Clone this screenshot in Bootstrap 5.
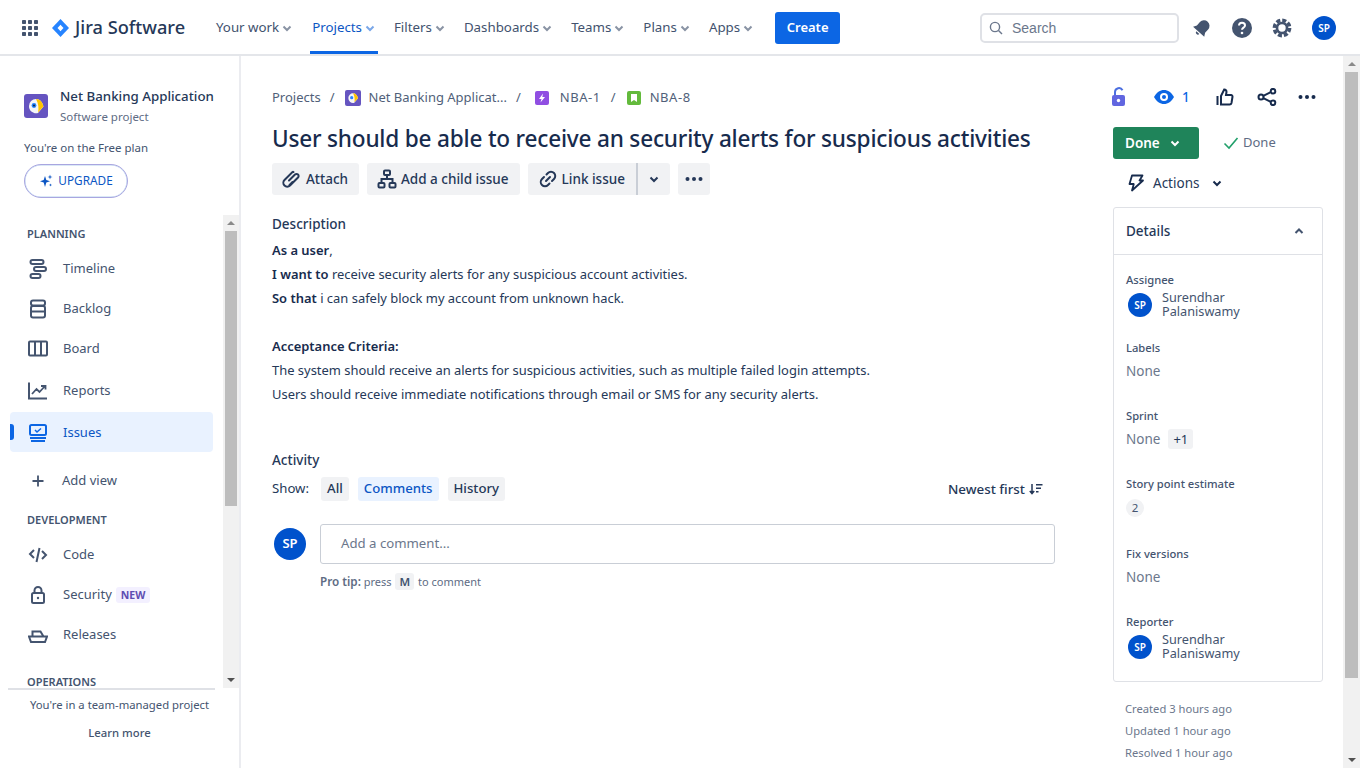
<!doctype html>
<html lang="en"><head><meta charset="utf-8"><title>NBA-8</title>
<link href="https://cdn.jsdelivr.net/npm/bootstrap@5.3.0/dist/css/bootstrap.min.css" rel="stylesheet">
<style>
html,body{height:768px;overflow:hidden}
body{font-family:"Noto Sans","Open Sans","Liberation Sans",sans-serif;font-size:13px;color:#253858;background:#fff}
svg{display:block;flex:none}
.topbar{height:56px;border-bottom:2px solid #e4e6ea;padding-left:22px}
.dn1{margin-top:2px}
.logo-mark{margin-left:14px}
.logo-text{font-size:18.2px;font-weight:500;color:#253858;margin-left:6px;width:141px;margin-top:1px}
.top-item{height:54px;padding:2px 6px 0 0;margin-right:12px;color:#42526e;font-size:13.3px;gap:2px;white-space:nowrap}
.top-item.on{color:#0c56c4;border-bottom:3px solid #0c66e4;margin:0 16px 0 -1px;padding:5px 2px 0 2px}
.create-btn{background:#0c66e4;color:#fff;font-weight:600;font-size:13px;width:65px;height:32px;border-radius:3px;margin-left:3px}
.search-box{width:199px;height:30px;border:2px solid #dfe1e6;border-radius:5px;padding-left:7px;gap:9px;color:#6b778c;font-family:"Liberation Sans",sans-serif;font-size:14px}
.top-icons{gap:20px;margin-left:13px;margin-right:24px}
.av{border-radius:50%;background:#0052cc;color:#fff;font-weight:600;flex:none}
.av-24{width:24px;height:24px;font-size:10px}
.av-32{width:32px;height:32px;font-size:13px}
.shell{height:712px}
.sidebar{width:241px;border-right:2px solid #ebecf0;flex:none}
.side-head{height:159px;padding:30px 0 0 24px}
.head-row{gap:12px}
.proj-name{font-size:13.3px;font-weight:500;color:#253858;line-height:20px}
.proj-sub{font-size:11.5px;color:#5e6c84;line-height:16px;margin-top:3px}
.free{font-size:11.5px;color:#44546f;line-height:16px;margin-top:15px}
.upgrade{width:104px;height:34px;margin-top:8px;border-radius:17px;border:1px solid #a9a6e0;color:#0c56c4;font-size:11.8px;gap:5px;box-shadow:inset 0 0 0 .5px #b8d4f0}
.side-scroll{height:473px;overflow:hidden}
.side-list{width:223px;flex:none;overflow:hidden}
.side-title{font-size:11px;font-weight:600;color:#44546f;line-height:16px;padding-left:27px;height:16px;margin-top:12px}
.side-row{height:40px;padding-left:28px;gap:15px;color:#44546f;font-size:13px;width:203px}
.side-row.on{background:#e9f2ff;color:#0c56c4;margin-left:10px;padding-left:18px;border-radius:4px;position:relative}
.side-row.on span{padding-top:2px}
.side-row.on svg{margin-top:2px}
.side-row.on::before{content:"";position:absolute;left:0;top:12px;width:4px;height:16px;background:#0c66e4;border-radius:0 3px 3px 0}
.new-tag{background:#f3f0ff;color:#5e4db2;font-weight:700;font-size:10.5px;line-height:16px;padding:0 5px;border-radius:3px;margin-left:-11px}
.mt-r2{margin-top:2px}
.mt-on{margin-top:1px}
.sb{width:16px;flex:none;background:#f1f1f1;padding:0 2px}
.sb-wide{width:17px}
.arrow-up,.arrow-down{height:16px;flex:none}
.arrow-up::after,.arrow-down::after{content:"";border-left:4px solid transparent;border-right:4px solid transparent}
.arrow-up::after{border-bottom:4px solid #8a8a8a}
.arrow-down::after{border-top:4px solid #505050}
.thumb{background:#bdbdbd;flex:none}
.thumb-side{height:275px}
.thumb-page{height:606px}
.foot-line{border-top:2px solid #dfe1e6;margin:0 24px 0 8px}
.side-foot{height:80px;text-align:center;font-size:11.3px;color:#44546f}
.foot-note{padding-top:7px}
.learn{font-weight:500;margin-top:11px;color:#44546f}
.body-col{width:814px;padding:33px 0 0 31px;flex:none}
.crumbs{height:18px;gap:8px;color:#505f79;font-size:13px}
.sep{margin:0 2px 0 1px}
.sep-wide{margin:0 6px 0 1px}
.sep-mid{margin:0 3px 0 2px}
.iss-key{letter-spacing:.55px;margin-left:3px}
.iss-key.last{margin-left:1px}
.issue-title{font-size:22.6px;font-weight:500;color:#172b4d;line-height:32px;margin:16px 0 8px;letter-spacing:-.2px;white-space:nowrap}
.act-row{gap:8px}
.act-btn{background:#f1f2f4;color:#253858;height:32px;border-radius:3px;padding:0 11px 0 10px;gap:4px;font-size:13.5px;font-weight:500;white-space:nowrap}
.link-main{border-right:2px solid #c9ced6;border-radius:3px 0 0 3px;width:110px}
.link-drop{width:32px;border-radius:0 3px 3px 0}
.more-btn{width:32px}
.section-h{font-size:13.5px;color:#253858;line-height:20px;font-weight:500}
.mt-desc{margin-top:19px}
.mt-act{margin-top:44px}
.desc{margin-top:6px;font-size:12.95px;line-height:24px;color:#253858}
.desc b{font-weight:600;color:#172b4d}
.first-line{margin-top:-2px}
.show-row{height:24px;margin-top:7px;font-size:13.2px;width:783px;gap:9px}
.show-lab{margin-right:3px}
.pill{background:#f1f2f4;height:24px;padding:0 6px;border-radius:3px;font-weight:500;color:#253858}
.pill.sel{background:#e9f2ff;color:#0c56c4}
.sorter{margin-right:12px;font-weight:500;font-size:13.4px}
.comment-row{gap:14px;margin-top:23px;padding-left:2px}
.comment{height:40px;border:1px solid #c9ced6;border-radius:3px;padding-left:20px;color:#6b778c;font-size:13.2px;width:735px}
.tip{font-size:11px;color:#5e6c84;margin:9px 0 0 48px;line-height:16px}
.tip b{font-weight:600;font-size:11.7px}
.tip kbd{background:#f1f2f4;color:#42526e;font:600 11.5px "Noto Sans",sans-serif;padding:1px 4px;border-radius:3px;margin:0 1px;box-shadow:none}
.side-col{width:210px;margin-left:58px;padding-top:29px;flex:none}
.icon-row{height:24px}
.ic-lock{margin-left:-3px}
.ic-eye{margin-left:25px}
.ic-count{margin-left:7px;color:#0c66e4;font-size:13.5px;font-weight:500;width:8px}
.ic-like{margin-left:26px}
.ic-share{margin-left:23px}
.ic-more{margin-left:20px}
.status-row{margin-top:18px}
.done-btn{background:#1f845a;color:#fff;font-weight:600;font-size:13.5px;width:86px;height:32px;border-radius:3px;padding-left:12px;gap:9px}
.done-note{color:#5e6c84;font-size:13px;margin-left:24px;gap:4px}
.actions{height:32px;margin:8px 0 8px 15px;gap:8px;font-size:13.5px;color:#253858}
.actions span{margin-left:1px}
.panel{border:1px solid #dfe1e6;border-radius:3px;height:475px}
.panel-h{height:47px;border-bottom:1px solid #dfe1e6;padding:0 17px 0 12px;font-size:13.5px;font-weight:500;color:#253858}
.panel-b{padding:17px 12px 0}
.f-label{font-size:11.2px;font-weight:500;color:#44546f;line-height:16px;margin-top:27px}
.f-first{margin-top:0}
.f-labels{margin-top:19px}
.f-fix{margin-top:29px}
.f-none{font-size:13.5px;color:#6b778c;line-height:20px;margin-top:5px}
.user{gap:10px;margin-top:1px;padding-left:2px;height:32px;font-size:12.7px;line-height:14px;color:#44546f}
.user-name{margin-top:-2px}
.meta{font-size:11.2px;color:#6b778c;line-height:22px;margin:16px 0 0 12px}
.plus{background:#f1f2f4;padding:0 5px;border-radius:3px;color:#253858;line-height:20px;margin-left:8px;font-size:13px}
.pt{width:18px;height:18px;background:#f1f2f4;border-radius:50%;font-size:11.5px;color:#44546f;margin-top:7px}
.side-title.mt-planning{margin-top:11px}
.mt-tl{margin-top:7px}
.mt-add{margin-top:9px}
.add-t{margin-left:-1px}
.side-title.mt-dev{margin-top:11px}
.mt-code{margin-top:7px}
.side-title.mt-ops{margin-top:19px}
</style></head>
<body>
<header class="topbar d-flex align-items-center">
  <svg class="dn1" width="16" height="16" viewBox="0 0 16 16" fill="#44546f"><g><rect width="4" height="4" rx=".8"/><rect x="6" width="4" height="4" rx=".8"/><rect x="12" width="4" height="4" rx=".8"/><rect y="6" width="4" height="4" rx=".8"/><rect x="6" y="6" width="4" height="4" rx=".8"/><rect x="12" y="6" width="4" height="4" rx=".8"/><rect y="12" width="4" height="4" rx=".8"/><rect x="6" y="12" width="4" height="4" rx=".8"/><rect x="12" y="12" width="4" height="4" rx=".8"/></g></svg>
  <svg class="logo-mark dn1" width="17" height="18" viewBox="0 0 17 18"><path d="M8.5 0 17 9l-8.500 9L0 9z" fill="#2684ff"/><path d="M8.500 5.800 11.500 9l-3 3.200L5.500 9z" fill="#fff"/></svg>
  <span class="logo-text">Jira Software</span>
  <div class="top-item d-flex align-items-center">Your work <svg width="12" height="12" viewBox="0 0 12 12" fill="none" stroke="#8993a4" stroke-width="2"><path d="m2.500 4.500 3.500 3.500 3.500-3.500"/></svg></div>
  <div class="top-item on d-flex align-items-center">Projects <svg width="12" height="12" viewBox="0 0 12 12" fill="none" stroke="#7aa7e8" stroke-width="2"><path d="m2.500 4.500 3.500 3.500 3.500-3.500"/></svg></div>
  <div class="top-item d-flex align-items-center">Filters <svg width="12" height="12" viewBox="0 0 12 12" fill="none" stroke="#8993a4" stroke-width="2"><path d="m2.500 4.500 3.500 3.500 3.500-3.500"/></svg></div>
  <div class="top-item d-flex align-items-center">Dashboards <svg width="12" height="12" viewBox="0 0 12 12" fill="none" stroke="#8993a4" stroke-width="2"><path d="m2.500 4.500 3.500 3.500 3.500-3.500"/></svg></div>
  <div class="top-item d-flex align-items-center">Teams <svg width="12" height="12" viewBox="0 0 12 12" fill="none" stroke="#8993a4" stroke-width="2"><path d="m2.500 4.500 3.500 3.500 3.500-3.500"/></svg></div>
  <div class="top-item d-flex align-items-center">Plans <svg width="12" height="12" viewBox="0 0 12 12" fill="none" stroke="#8993a4" stroke-width="2"><path d="m2.500 4.500 3.500 3.500 3.500-3.500"/></svg></div>
  <div class="top-item d-flex align-items-center">Apps <svg width="12" height="12" viewBox="0 0 12 12" fill="none" stroke="#8993a4" stroke-width="2"><path d="m2.500 4.500 3.500 3.500 3.500-3.500"/></svg></div>
  <div class="create-btn dn1 d-flex align-items-center justify-content-center">Create</div>
  <div class="ms-auto search-box dn1 d-flex align-items-center"><svg width="14" height="14" viewBox="0 0 14 14" fill="none" stroke="#6b778c" stroke-width="1.400"><circle cx="6" cy="6" r="4.600"/><path d="m9.500 9.500 3.500 3.500"/></svg>Search</div>
  <div class="top-icons dn1 d-flex align-items-center">
    <svg width="20" height="20" viewBox="0 0 20 20" fill="#44546f"><g transform="rotate(42 10 10)"><path d="M10 1.500a5.500 5.500 0 0 0-5.500 5.500v4.500L2.500 15h15l-2-3.500V7A5.500 5.500 0 0 0 10 1.500z"/><path d="M8 16.200h4a2 2 0 0 1-4 0z"/></g></svg>
    <svg width="20" height="20" viewBox="0 0 20 20"><circle cx="10" cy="10" r="10" fill="#44546f"/><path d="M7 7.600c0-1.700 1.300-2.800 3-2.800s3 1 3 2.600c0 2.300-3 2.200-3 4.400" fill="none" stroke="#fff" stroke-width="2"/><circle cx="10" cy="15" r="1.300" fill="#fff"/></svg>
    <svg width="20" height="20" viewBox="0 0 20 20" fill="none" stroke="#44546f"><circle cx="10" cy="10" r="5" stroke-width="2.600"/><circle cx="10" cy="10" r="7.600" stroke-width="3.600" stroke-dasharray="4 1.970"/></svg>
    <div class="av av-24 d-flex align-items-center justify-content-center">SP</div>
  </div>
</header>
<div class="shell d-flex">
  <aside class="sidebar d-flex flex-column">
    <div class="side-head">
      <div class="head-row d-flex align-items-center">
        <svg width="24" height="24" viewBox="0 0 24 24"><rect width="24" height="24" rx="3" fill="#6554c0"/><path d="M5 12a7 7 0 0 1 7-7c4 0 6.500 3 7.500 7.500L14 19a7 7 0 0 1-9-7z" fill="#f4f5f7"/><path d="M12 5c4 0 6.500 3 7.500 7.500L14 18.500c1-4 .5-9-2-13.500z" fill="#ffc400"/><circle cx="10" cy="11.500" r="2.400" fill="#2684ff"/><circle cx="10" cy="11.500" r="1.100" fill="#172b4d"/></svg>
        <div><div class="proj-name">Net Banking Application</div><div class="proj-sub">Software project</div></div>
      </div>
      <div class="free">You're on the Free plan</div>
      <div class="upgrade d-flex align-items-center justify-content-center"><svg width="14" height="14" viewBox="0 0 14 14" fill="#0c56c4"><path d="M6 2 7.300 6 11 7.300 7.300 8.600 6 13 4.700 8.600 1 7.300 4.700 6z"/><path d="M11 .5l.6 1.900 1.900.6-1.900.6L11 5.500l-.6-1.900L8.500 3l1.900-.6zM11.500 9.500l.4 1.100 1.100.4-1.100.4-.4 1.100-.4-1.100-1.100-.4 1.100-.4z"/></svg>UPGRADE</div>
    </div>
    <div class="side-scroll d-flex">
      <nav class="side-list">
        <div class="side-title mt-planning">PLANNING</div>
        <div class="side-row d-flex align-items-center mt-tl"><svg width="20" height="20" viewBox="0 0 20 20" fill="none" stroke="#44546f" stroke-width="2"><rect x="2.500" y="1" width="13" height="4" rx="2"/><rect x="6" y="8" width="12" height="4" rx="2"/><rect x="2.500" y="15" width="10" height="4" rx="2"/></svg><span>Timeline</span></div>
        <div class="side-row d-flex align-items-center"><svg width="20" height="20" viewBox="0 0 20 20" fill="none" stroke="#44546f" stroke-width="2"><rect x="3" y="1.500" width="14" height="5" rx="2"/><path d="M3 12.500h14"/><rect x="3" y="7" width="14" height="11.500" rx="2"/></svg><span>Backlog</span></div>
        <div class="side-row d-flex align-items-center"><svg width="20" height="20" viewBox="0 0 20 20" fill="none" stroke="#44546f" stroke-width="2"><rect x="1" y="2.500" width="18" height="14" rx="1"/><path d="M7 2.500v14M13 2.500v14"/></svg><span>Board</span></div>
        <div class="side-row d-flex align-items-center mt-r2"><svg width="20" height="20" viewBox="0 0 20 20" fill="none" stroke="#44546f" stroke-width="2"><path d="M1 1.500v16h18" /><path d="m4 13 4.500-5 3 3L17 5M13 5h4.500v3.500" stroke-width="1.800"/></svg><span>Reports</span></div>
        <div class="side-row on d-flex align-items-center mt-on"><svg width="20" height="20" viewBox="0 0 20 20" fill="none" stroke="#0c66e4" stroke-width="2"><rect x="2" y="2" width="16" height="10" rx="1.500"/><path d="m7 7 2 2 4-3.500" stroke-width="1.500"/><path d="M2 15h16M3 18h14"/></svg><span>Issues</span></div>
        <div class="side-row d-flex align-items-center mt-add"><svg width="20" height="20" viewBox="0 0 20 20" fill="none" stroke="#44546f" stroke-width="1.800"><path d="M10 4.500v11M4.500 10h11"/></svg><span class="add-t">Add view</span></div>
        <div class="side-title mt-dev">DEVELOPMENT</div>
        <div class="side-row d-flex align-items-center mt-code"><svg width="20" height="20" viewBox="0 0 20 20" fill="none" stroke="#44546f" stroke-width="2"><path d="M6 5 2 9l4 4M14 6l4 4-4 4M11.500 3 8.500 17"/></svg><span>Code</span></div>
        <div class="side-row d-flex align-items-center"><svg width="20" height="20" viewBox="0 0 20 20" fill="none" stroke="#44546f" stroke-width="2"><rect x="4" y="8" width="12" height="10" rx="1.500"/><path d="M6.500 8V5.500a3.500 3.500 0 0 1 7 0V8"/><circle cx="10" cy="13" r="1.200" fill="#44546f" stroke="none"/></svg><span>Security</span><span class="new-tag">NEW</span></div>
        <div class="side-row d-flex align-items-center"><svg width="20" height="20" viewBox="0 0 20 20" fill="none" stroke="#44546f" stroke-width="2"><path d="M1 11.500h18l-2 5.500H3zM4.500 11.500V6.500h8l3 5"/></svg><span>Releases</span></div>
        <div class="side-title mt-ops">OPERATIONS</div>
      </nav>
      <div class="sb d-flex flex-column">
        <div class="arrow-up d-flex align-items-center justify-content-center"></div>
        <div class="thumb thumb-side"></div>
        <div class="flex-grow-1"></div>
        <div class="arrow-down d-flex align-items-center justify-content-center"></div>
      </div>
    </div>
    <div class="side-foot"><div class="foot-line"></div><div class="foot-note">You're in a team-managed project</div><div class="learn">Learn more</div></div>
  </aside>
  <main class="flex-grow-1 d-flex overflow-hidden">
    <div class="body-col">
      <div class="crumbs d-flex align-items-center">
        <span>Projects</span><span class="sep">/</span>
        <svg width="16" height="16" viewBox="0 0 24 24"><rect width="24" height="24" rx="3" fill="#6554c0"/><path d="M5 12a7 7 0 0 1 7-7c4 0 6.500 3 7.500 7.500L14 19a7 7 0 0 1-9-7z" fill="#f4f5f7"/><path d="M12 5c4 0 6.500 3 7.500 7.500L14 18.500c1-4 .5-9-2-13.500z" fill="#ffc400"/><circle cx="10" cy="11.500" r="2.400" fill="#2684ff"/></svg>
        <span>Net Banking Applicat...</span><span class="sep-wide">/</span>
        <svg width="14" height="14" viewBox="0 0 14 14"><rect width="14" height="14" rx="2" fill="#904ee2"/><path d="M8 2.500 4 8h2.500l-1 3.500L10 6H7.300z" fill="#fff"/></svg>
        <span class="iss-key">NBA-1</span><span class="sep-mid">/</span>
        <svg width="14" height="14" viewBox="0 0 14 14"><rect width="14" height="14" rx="2" fill="#63ba3c"/><path d="M4 3h6v8L7 9l-3 2z" fill="#fff"/></svg>
        <span class="iss-key last">NBA-8</span>
      </div>
      <h1 class="issue-title">User should be able to receive an security alerts for suspicious activities</h1>
      <div class="act-row d-flex">
        <div class="act-btn d-flex align-items-center"><svg width="20" height="20" viewBox="0 0 20 20" fill="none" stroke="#253858" stroke-width="2" stroke-linecap="round"><path d="m7 11.500 6-6a2.100 2.100 0 0 1 3 3l-8 8a3.800 3.800 0 0 1-5.500-5.500l8-8a1 1 0 0 1 1 0"/><path d="m10.500 13-3 3"/></svg>Attach</div>
        <div class="act-btn d-flex align-items-center"><svg width="20" height="20" viewBox="0 0 20 20" fill="none" stroke="#253858" stroke-width="2"><rect x="7" y="1.500" width="6" height="4.500" rx="1"/><rect x="1.500" y="14" width="6" height="4.500" rx="1"/><rect x="12.500" y="14" width="6" height="4.500" rx="1"/><path d="M10 6v4M4.500 14v-4h11v4"/></svg>Add a child issue</div>
        <div class="d-flex">
          <div class="act-btn link-main d-flex align-items-center"><svg width="20" height="20" viewBox="0 0 20 20" fill="none" stroke="#253858" stroke-width="2" stroke-linecap="round"><path d="m8 12 4-4M8.500 5.500l1.500-1.500a4 4 0 0 1 6 6l-2 2M11.500 14.500 10 16a4 4 0 0 1-6-6l2-2"/></svg>Link issue</div>
          <div class="act-btn link-drop d-flex align-items-center justify-content-center px-0"><svg width="12" height="12" viewBox="0 0 12 12" fill="none" stroke="#253858" stroke-width="2"><path d="m2.500 4.500 3.500 3.500 3.500-3.500"/></svg></div>
        </div>
        <div class="act-btn more-btn d-flex align-items-center justify-content-center px-0"><svg width="20" height="6" viewBox="0 0 20 6" fill="#253858"><circle cx="3.500" cy="3" r="2"/><circle cx="10" cy="3" r="2"/><circle cx="16.500" cy="3" r="2"/></svg></div>
      </div>
      <div class="section-h mt-desc">Description</div>
      <div class="desc">
        <div class="first-line"><b>As a user</b>,</div>
        <div><b>I want to</b> receive security alerts for any suspicious account activities.</div>
        <div><b>So that</b> i can safely block my account from unknown hack.</div>
        <div>&nbsp;</div>
        <div><b>Acceptance Criteria:</b></div>
        <div>The system should receive an alerts for suspicious activities, such as multiple failed login attempts.</div>
        <div>Users should receive immediate notifications through email or SMS for any security alerts.</div>
      </div>
      <div class="section-h mt-act">Activity</div>
      <div class="show-row d-flex align-items-center">
        <span class="show-lab">Show:</span>
        <span class="pill d-flex align-items-center">All</span>
        <span class="pill sel d-flex align-items-center">Comments</span>
        <span class="pill d-flex align-items-center">History</span>
        <span class="sorter ms-auto d-flex align-items-center gap-1">Newest first <svg width="14" height="12" viewBox="0 0 14 12" fill="none" stroke="#253858" stroke-width="1.500"><path d="M3 1v9M.8 8 3 10.500 5.200 8M7 1.700h6.500M7 5.200h5M7 8.700h2.500"/></svg></span>
      </div>
      <div class="comment-row d-flex align-items-center">
        <div class="av av-32 d-flex align-items-center justify-content-center">SP</div>
        <div class="comment d-flex align-items-center">Add a comment...</div>
      </div>
      <div class="tip"><b>Pro tip:</b> press <kbd>M</kbd> to comment</div>
    </div>
    <div class="side-col">
      <div class="icon-row d-flex align-items-center">
        <svg class="ic-lock" width="18" height="20" viewBox="0 0 18 20"><path d="M5 9V5a4 4 0 0 1 7.500-1.800" fill="none" stroke="#4c6fe0" stroke-width="2"/><rect x="2" y="8" width="13" height="11" rx="2" fill="#6166e0"/><circle cx="8.500" cy="13.500" r="1.700" fill="#fff"/></svg>
        <svg class="ic-eye" width="22" height="16" viewBox="0 0 22 16"><path d="M1 8c2.500-4.500 6-7 10-7s7.500 2.500 10 7c-2.500 4.500-6 7-10 7S3.500 12.500 1 8z" fill="#0c66e4"/><circle cx="11" cy="8" r="4" fill="#fff"/><circle cx="11" cy="8" r="2" fill="#0c66e4"/></svg>
        <span class="ic-count">1</span>
        <svg class="ic-like" width="18" height="18" viewBox="0 0 18 18" fill="none" stroke="#172b4d" stroke-width="2"><path d="M1.500 8v9M5 8l3.200-6.500c1.500 0 2.300 1 2.300 2.500l-.5 3h5a1.500 1.500 0 0 1 1.500 1.800l-1 6.200a2 2 0 0 1-2 1.500H5z"/></svg>
        <svg class="ic-share" width="20" height="18" viewBox="0 0 20 18" fill="none" stroke="#172b4d" stroke-width="2"><circle cx="4" cy="9" r="2.500"/><circle cx="16" cy="3.200" r="2.300"/><circle cx="16" cy="14.800" r="2.300"/><path d="m6.300 7.900 7.500-3.700M6.300 10.100l7.500 3.700"/></svg>
        <svg class="ic-more" width="20" height="6" viewBox="0 0 20 6" fill="#172b4d"><circle cx="3.500" cy="3" r="2"/><circle cx="10" cy="3" r="2"/><circle cx="16.500" cy="3" r="2"/></svg>
      </div>
      <div class="status-row d-flex align-items-center">
        <div class="done-btn d-flex align-items-center">Done <svg width="12" height="12" viewBox="0 0 12 12" fill="none" stroke="#fff" stroke-width="2"><path d="m2.500 4.500 3.500 3.500 3.500-3.500"/></svg></div>
        <div class="done-note d-flex align-items-center"><svg width="16" height="14" viewBox="0 0 16 14" fill="none" stroke="#22a06b" stroke-width="1.600"><path d="m1.500 7.500 4.500 4.500 8.500-10"/></svg>Done</div>
      </div>
      <div class="actions d-flex align-items-center"><svg width="16" height="18" viewBox="0 0 16 18" fill="none" stroke="#172b4d" stroke-width="1.800" stroke-linejoin="round"><path d="M4 1.500h10.500L11.500 6.500H15L4 16.500l1.800-6.500H1.500z"/></svg><span>Actions</span><svg class="ms-1" width="12" height="12" viewBox="0 0 12 12" fill="none" stroke="#172b4d" stroke-width="2"><path d="m2.500 4.500 3.500 3.500 3.500-3.500"/></svg></div>
      <section class="panel">
        <div class="panel-h d-flex align-items-center justify-content-between">Details <svg width="12" height="12" viewBox="0 0 12 12" fill="none" stroke="#44546f" stroke-width="2"><path d="m2.500 8 3.500-3.500 3.500 3.500"/></svg></div>
        <div class="panel-b">
          <div class="f-label f-first">Assignee</div>
          <div class="user d-flex align-items-center"><div class="av av-24 d-flex align-items-center justify-content-center">SP</div><div class="user-name">Surendhar<br>Palaniswamy</div></div>
          <div class="f-label f-labels">Labels</div>
          <div class="f-none">None</div>
          <div class="f-label">Sprint</div>
          <div class="f-none d-flex align-items-center">None <span class="plus">+1</span></div>
          <div class="f-label">Story point estimate</div>
          <div class="pt d-flex align-items-center justify-content-center">2</div>
          <div class="f-label f-fix">Fix versions</div>
          <div class="f-none">None</div>
          <div class="f-label">Reporter</div>
          <div class="user d-flex align-items-center"><div class="av av-24 d-flex align-items-center justify-content-center">SP</div><div class="user-name">Surendhar<br>Palaniswamy</div></div>
        </div>
      </section>
      <div class="meta"><div>Created 3 hours ago</div><div>Updated 1 hour ago</div><div>Resolved 1 hour ago</div></div>
    </div>
    <div class="sb sb-wide ms-auto d-flex flex-column">
      <div class="arrow-up d-flex align-items-center justify-content-center"></div>
      <div class="thumb thumb-page"></div>
      <div class="flex-grow-1"></div>
      <div class="arrow-down d-flex align-items-center justify-content-center"></div>
    </div>
  </main>
</div>
<script src="https://cdn.jsdelivr.net/npm/bootstrap@5.3.0/dist/js/bootstrap.bundle.min.js"></script>
</body></html>
